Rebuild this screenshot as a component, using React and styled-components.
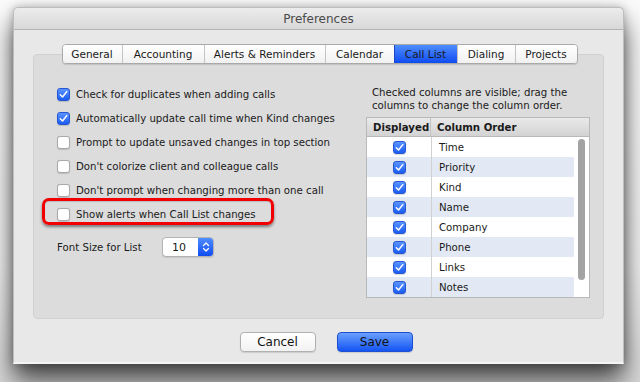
import React from 'react';
import styled, { createGlobalStyle } from 'styled-components';

const Global = createGlobalStyle`
  html, body { margin: 0; padding: 0; }
  body {
    font-family: "DejaVu Sans", "Liberation Sans", sans-serif;
    background: #f6f6f6;
    color: #1a1a1a;
  }
`;

const tabs = [
  { label: 'General', w: 59 },
  { label: 'Accounting', w: 81 },
  { label: 'Alerts & Reminders', w: 120 },
  { label: 'Calendar', w: 68 },
  { label: 'Call List', w: 62, active: true },
  { label: 'Dialing', w: 57 },
  { label: 'Projects', w: 61 },
];

const options = [
  { label: 'Check for duplicates when adding calls', checked: true },
  { label: 'Automatically update call time when Kind changes', checked: true },
  { label: 'Prompt to update unsaved changes in top section' },
  { label: "Don't colorize client and colleague calls" },
  { label: "Don't prompt when changing more than one call" },
  { label: 'Show alerts when Call List changes', highlight: true },
];

const columns = ['Time', 'Priority', 'Kind', 'Name', 'Company', 'Phone', 'Links', 'Notes'];

function Check({ checked }) {
  return (
    <Box checked={checked}>
      {checked && (
        <svg width="9" height="9" viewBox="0 0 9 9">
          <path d="M1.3 4.8 L3.5 7 L7.8 1.6" fill="none" stroke="#fff" strokeWidth="1.5" strokeLinecap="round" strokeLinejoin="round" />
        </svg>
      )}
    </Box>
  );
}

export default function App() {
  return (
    <>
      <Global />
      <Page>
        <Window>
          <TitleBar>Preferences</TitleBar>
          <Body>
            <TabBar>
              {tabs.map((t) => (
                <Tab key={t.label} w={t.w} active={t.active}>{t.label}</Tab>
              ))}
            </TabBar>
            <Panel>
              <LeftCol>
                {options.map((o) => (
                  <OptionRow key={o.label} highlight={o.highlight}>
                    <Check checked={o.checked} />
                    <span>{o.label}</span>
                  </OptionRow>
                ))}
                <FontRow>
                  <span>Font Size for List</span>
                  <Select>
                    <SelectValue>10</SelectValue>
                    <Stepper>
                      <svg width="8" height="12" viewBox="0 0 8 12">
                        <path d="M1.5 4.5 L4 2 L6.5 4.5 M1.5 7.5 L4 10 L6.5 7.5" fill="none" stroke="#fff" strokeWidth="1.3" strokeLinecap="round" strokeLinejoin="round" />
                      </svg>
                    </Stepper>
                  </Select>
                </FontRow>
              </LeftCol>
              <RightCol>
                <Hint>Checked columns are visible; drag the<br />columns to change the column order.</Hint>
                <Table>
                  <HeadRow>
                    <HeadCell first>Displayed</HeadCell>
                    <HeadCell>Column Order</HeadCell>
                  </HeadRow>
                  <TableBody>
                    <Rows>
                      {columns.map((c, i) => (
                        <Row key={c} alt={i % 2 === 1}>
                          <CheckCell><Check checked /></CheckCell>
                          <NameCell>{c}</NameCell>
                        </Row>
                      ))}
                    </Rows>
                    <ScrollTrack>
                      <Thumb />
                    </ScrollTrack>
                  </TableBody>
                </Table>
              </RightCol>
            </Panel>
            <Footer>
              <Button>Cancel</Button>
              <Button primary>Save</Button>
            </Footer>
          </Body>
        </Window>
      </Page>
    </>
  );
}

const Page = styled.div`
  width: 640px;
  height: 382px;
  overflow: hidden;
  padding: 7px 0 0 13px;
  box-sizing: border-box;
  background: linear-gradient(#fbfbfb 0%, #f2f2f2 70%, #d8d8d8 100%);
`;

const Window = styled.div`
  width: 611px;
  height: 357px;
  box-sizing: border-box;
  background: #e8e8e8;
  border: 1px solid #bdbdbd;
  border-bottom: 2px solid #f4f4f4;
  border-radius: 5px 5px 0 0;
  box-shadow: 0 16px 26px rgba(0, 0, 0, 0.7), 0 0 10px rgba(0, 0, 0, 0.25);
  display: flex;
  flex-direction: column;
`;

const TitleBar = styled.div`
  height: 21px;
  flex: none;
  display: flex;
  align-items: center;
  justify-content: center;
  font-size: 12px;
  color: #4a4a4a;
  background: linear-gradient(#ececec, #d8d8d8);
  border-bottom: 1px solid #b4b4b4;
  border-radius: 5px 5px 0 0;
`;

const Body = styled.div`
  flex: 1;
  display: flex;
  flex-direction: column;
  padding: 14px 19px 0 19px;
`;

const TabBar = styled.div`
  display: flex;
  align-self: center;
  margin-left: 2px;
  margin-bottom: -10px;
  position: relative;
  z-index: 1;
  border: 1px solid #a9a9a9;
  border-radius: 4px;
  overflow: hidden;
  box-shadow: 0 1px 1px rgba(0, 0, 0, 0.12);
`;

const Tab = styled.div`
  width: ${(p) => p.w}px;
  height: 18px;
  display: flex;
  align-items: center;
  justify-content: center;
  font-size: 10.5px;
  color: #1a1a1a;
  background: ${(p) => (p.active ? 'linear-gradient(#4f8dff, #0f4cf0)' : 'linear-gradient(#ffffff, #f1f1f1)')};
  border-left: 1px solid ${(p) => (p.active ? '#1c47c4' : '#c4c4c4')};
  &:first-child { border-left: none; }
`;

const Panel = styled.div`
  height: 265px;
  box-sizing: border-box;
  background: #dcdcdc;
  border: 1px solid #d0d0d0;
  border-radius: 4px;
  display: grid;
  grid-template-columns: 309px 224px;
  padding: 27px 0 0 23px;
`;

const LeftCol = styled.div`
  display: flex;
  flex-direction: column;
`;

const OptionRow = styled.div`
  height: 24px;
  display: flex;
  align-items: center;
  gap: 6px;
  font-size: 10.2px;
  white-space: nowrap;
  position: relative;
  &::after {
    content: '';
    display: ${(p) => (p.highlight ? 'block' : 'none')};
    position: absolute;
    left: -15px;
    top: -4px;
    width: 226px;
    height: 21px;
    border: 3px solid #f20000;
    border-radius: 7px;
    box-shadow: 0 2px 3px rgba(0, 0, 0, 0.45), inset 0 1px 1px rgba(0, 0, 0, 0.15);
  }
`;

const Box = styled.div`
  width: 13px;
  height: 13px;
  box-sizing: border-box;
  flex: none;
  border-radius: 3px;
  display: flex;
  align-items: center;
  justify-content: center;
  background: ${(p) => (p.checked ? 'linear-gradient(#5a94ff, #1a5cf2)' : '#fff')};
  border: 1px solid ${(p) => (p.checked ? '#2456d6' : '#a9a9a9')};
  box-shadow: 0 0.5px 1px rgba(0, 0, 0, 0.15);
`;

const FontRow = styled.div`
  display: flex;
  align-items: center;
  margin-top: 11px;
  font-size: 10.2px;
  & > span { width: 105px; }
`;

const Select = styled.div`
  width: 52px;
  height: 20px;
  box-sizing: border-box;
  display: flex;
  border: 1px solid #b3b3b3;
  border-radius: 4px;
  overflow: hidden;
  background: #fff;
  box-shadow: 0 1px 1px rgba(0, 0, 0, 0.1);
`;

const SelectValue = styled.div`
  flex: 1;
  font-size: 11px;
  display: flex;
  align-items: center;
  padding-left: 9px;
`;

const Stepper = styled.div`
  width: 15px;
  display: flex;
  align-items: center;
  justify-content: center;
  background: linear-gradient(#4f8dff, #0f4cf0);
`;

const RightCol = styled.div`
  display: flex;
  flex-direction: column;
  padding-top: 5px;
`;

const Hint = styled.div`
  font-size: 10.2px;
  line-height: 12.5px;
  padding-left: 6px;
  margin-bottom: 5px;
`;

const Table = styled.div`
  width: 224px;
  border: 1px solid #b9b9b9;
  background: #fff;
  box-sizing: border-box;
`;

const HeadRow = styled.div`
  display: flex;
  height: 18px;
  background: linear-gradient(#e9e9e9, #d3d3d3);
  border-bottom: 1px solid #b8b8b8;
`;

const HeadCell = styled.div`
  width: ${(p) => (p.first ? '64px' : 'auto')};
  flex: ${(p) => (p.first ? 'none' : '1')};
  display: flex;
  align-items: center;
  padding-left: 6px;
  box-sizing: border-box;
  font-size: 10.2px;
  font-weight: bold;
  border-right: ${(p) => (p.first ? '1px solid #c3c3c3' : 'none')};
`;

const TableBody = styled.div`
  display: flex;
`;

const Rows = styled.div`
  flex: 1;
`;

const Row = styled.div`
  display: flex;
  height: 20px;
  background: ${(p) => (p.alt ? '#e2e9f4' : '#fff')};
`;

const CheckCell = styled.div`
  width: 64px;
  flex: none;
  display: flex;
  align-items: center;
  justify-content: center;
  border-right: 1px solid #d0d0d0;
`;

const NameCell = styled.div`
  flex: 1;
  display: flex;
  align-items: center;
  padding-left: 7px;
  font-size: 10.2px;
`;

const ScrollTrack = styled.div`
  width: 15px;
  background: #fff;
  display: flex;
  justify-content: center;
  padding-top: 2px;
`;

const Thumb = styled.div`
  width: 7px;
  height: 141px;
  border-radius: 4px;
  background: #a3a3a3;
`;

const Footer = styled.div`
  display: flex;
  justify-content: center;
  gap: 21px;
  margin-top: 13px;
  padding-left: 15px;
`;

const Button = styled.div`
  width: 76px;
  height: 20px;
  box-sizing: border-box;
  display: flex;
  align-items: center;
  justify-content: center;
  font-size: 12px;
  color: #111;
  border-radius: 4px;
  border: 1px solid ${(p) => (p.primary ? '#1d4fd0' : '#b0b0b0')};
  background: ${(p) => (p.primary ? 'linear-gradient(#6aa0ff, #1454f3)' : 'linear-gradient(#ffffff, #f2f2f2)')};
  box-shadow: 0 1px 1px rgba(0, 0, 0, 0.12);
`;
